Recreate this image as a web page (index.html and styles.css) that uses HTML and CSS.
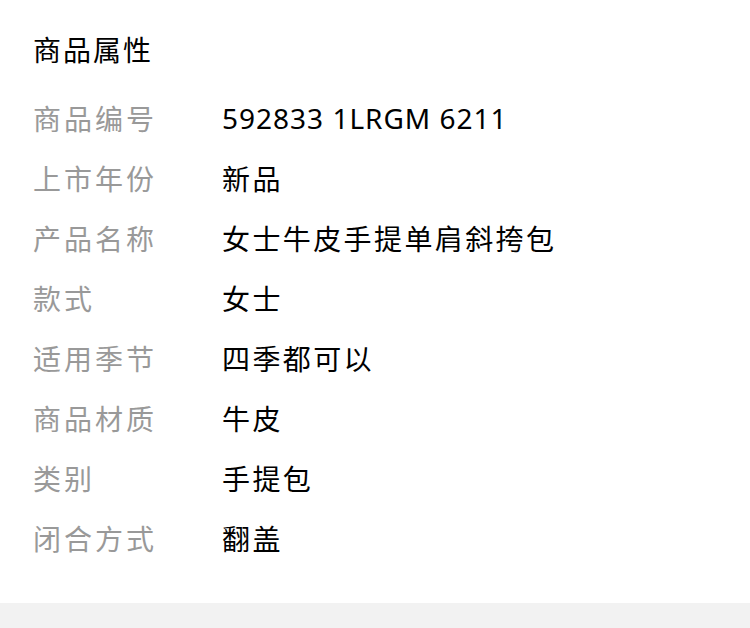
FILE: index.html
```html
<!DOCTYPE html>
<html lang="zh-CN">
  <head>
    <meta charset="UTF-8" />
    <meta name="viewport" content="width=device-width, initial-scale=1.0" />
    <title>商品属性</title>
    <link rel="stylesheet" href="styles.css">
  </head>
  <body>
    <div class="attr-panel">
      <h2 class="attr-title">商品属性</h2>
      <div class="attr-list">
        <div class="attr-row"><span class="attr-label">商品编号</span><span class="attr-value attr-code">592833 1LRGM 6211</span></div>
        <div class="attr-row"><span class="attr-label">上市年份</span><span class="attr-value">新品</span></div>
        <div class="attr-row"><span class="attr-label">产品名称</span><span class="attr-value">女士牛皮手提单肩斜挎包</span></div>
        <div class="attr-row"><span class="attr-label">款式</span><span class="attr-value">女士</span></div>
        <div class="attr-row"><span class="attr-label">适用季节</span><span class="attr-value">四季都可以</span></div>
        <div class="attr-row"><span class="attr-label">商品材质</span><span class="attr-value">牛皮</span></div>
        <div class="attr-row"><span class="attr-label">类别</span><span class="attr-value">手提包</span></div>
        <div class="attr-row"><span class="attr-label">闭合方式</span><span class="attr-value">翻盖</span></div>
      </div>
    </div>
    <div class="footer-bar"></div>
  </body>
</html>
```

FILE: styles.css
```css
body {
  margin: 0;
  background-color: #fff;
  font-family: "Noto Sans", "Noto Sans CJK SC", sans-serif;
}
.attr-panel {
  padding: 20px 33px 35px;
}
.attr-title {
  margin: 0 0 8px;
  font-size: 28px;
  font-weight: normal;
  line-height: 60px;
  letter-spacing: 2px;
  color: #000;
}
.attr-list {
  display: flex;
  flex-direction: column;
}
.attr-row {
  display: flex;
  height: 60px;
  align-items: center;
  font-size: 28px;
}
.attr-label {
  width: 189px;
  flex-shrink: 0;
  color: #999;
  letter-spacing: 3px;
}
.attr-value {
  color: #000;
  letter-spacing: 2.4px;
}
.attr-code {
  letter-spacing: 1px;
}
.footer-bar {
  height: 25px;
  background-color: #f2f2f2;
}
```
